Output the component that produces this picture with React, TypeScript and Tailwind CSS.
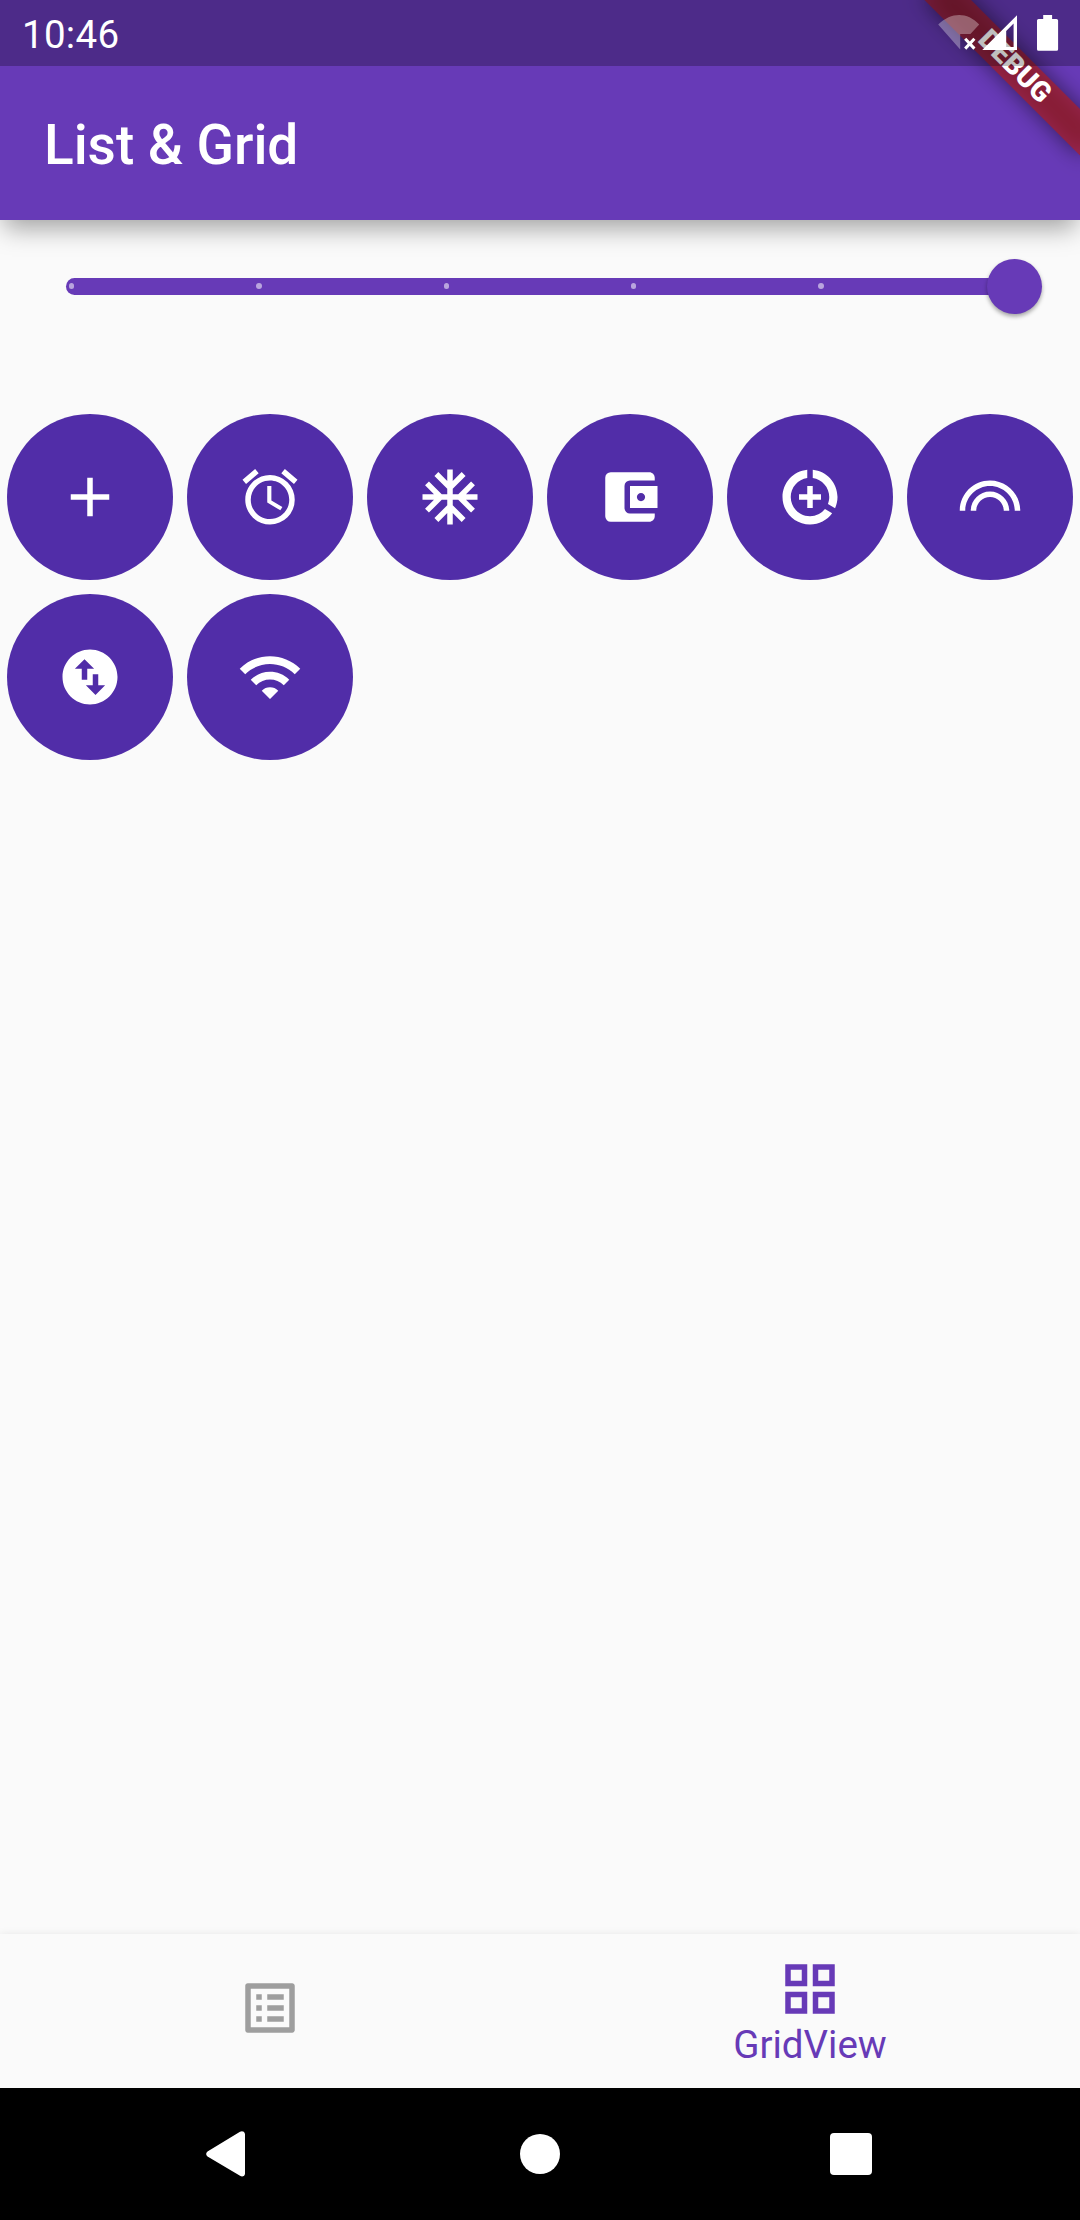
import type { IconType } from 'react-icons';
import {
  MdAccessAlarm,
  MdAccountBalanceWallet,
  MdAcUnit,
  MdAdd,
  MdDataSaverOn,
  MdGridView,
  MdListAlt,
  MdLooks,
  MdSwapVerticalCircle,
  MdWifi,
} from 'react-icons/md';

const gridIcons: IconType[] = [
  MdAdd,
  MdAccessAlarm,
  MdAcUnit,
  MdAccountBalanceWallet,
  MdDataSaverOn,
  MdLooks,
  MdSwapVerticalCircle,
  MdWifi,
];

function StatusBar() {
  return (
    <div className="absolute inset-x-0 top-0 z-20 flex h-[66px] items-start justify-between bg-black/25 pl-[22px] text-white">
      <span className="mt-[12px] text-[38.5px] leading-[46px] tracking-[0.3px]">10:46</span>
      <svg width="180" height="66" viewBox="0 0 180 66" fill="currentColor">
        <path opacity=".32" d="M38.2 24.4C45 18.2 52 15 59.2 15S73 18.2 79.2 24.4L70.4 34H60.2V49.6Z" />
        <path d="M65.2 38.8l9.2 9.8M74.4 38.8l-9.2 9.8" fill="none" stroke="currentColor" strokeWidth="3" />
        <path fillRule="evenodd" d="M82.2 50L117 15.2V50ZM106.2 47H113.6V23.6L106.2 31Z" />
        <path d="M143.2 15h8.9v4h4.4q1.6 0 1.6 1.6v28.6q0 1.6-1.6 1.6h-17.9q-1.6 0-1.6-1.6V20.6q0-1.6 1.6-1.6h4.6z" />
      </svg>
    </div>
  );
}

function DebugBanner() {
  return (
    <div className="absolute right-0 top-0 z-10 h-[180px] w-[180px] overflow-hidden">
      <div className="absolute -right-[110px] top-[77px] h-[33px] w-[220px] origin-[110px_-77px] rotate-45">
        <div className="absolute inset-0 bg-black/50 blur-[10.9px]" />
        <div className="absolute inset-0 flex items-center justify-center bg-[#b71c1c]/63 pl-[2px] text-[28.05px] font-black leading-none text-white">
          DEBUG
        </div>
      </div>
    </div>
  );
}

function Slider() {
  return (
    <div className="flex h-[132px] items-center pl-[66px]">
      <div className="relative flex h-[17px] w-[948px] items-center rounded-l-full bg-[#673ab7] pl-[2.75px]">
        {[0, 1, 2, 3, 4].map((tick) => (
          <div key={tick} className="flex w-[187.4px] shrink-0 items-center">
            <span className="size-[5.5px] rounded-full bg-white/54" />
          </div>
        ))}
        <div className="absolute -right-[28px] size-[55px] rounded-full bg-[#673ab7] shadow-[0_2.5px_4px_rgba(0,0,0,0.35)]" />
      </div>
    </div>
  );
}

export default function App() {
  return (
    <div className="relative flex h-[2220px] w-[1080px] flex-col overflow-hidden bg-[#fafafa] font-['Roboto',sans-serif]">
      <StatusBar />
      <DebugBanner />
      <header className="flex h-[220px] shrink-0 items-center bg-[#673ab7] pl-[44px] pt-[70px] shadow-[0_12px_24px_-4px_rgba(0,0,0,0.36)]">
        <h1 className="text-[55px] font-medium leading-[64px] tracking-[-0.05px] text-white">List &amp; Grid</h1>
      </header>

      <main className="flex flex-1 flex-col gap-[55px]">
        <Slider />
        <div className="grid grid-cols-6">
          {gridIcons.map((Icon, i) => (
            <div key={i} className="flex h-[180px] items-center justify-center">
              <div className="flex size-[165.4px] items-center justify-center rounded-full bg-[#512da8] text-white">
                <Icon size={66} />
              </div>
            </div>
          ))}
        </div>
      </main>

      <nav className="grid h-[154px] shrink-0 grid-cols-2 bg-[#fafafa] shadow-[0_0_8px_rgba(0,0,0,0.08)]">
        <div className="flex justify-center pt-[41px] text-[#9e9e9e]">
          <MdListAlt size={66} />
        </div>
        <div className="flex flex-col items-center pt-[22px] text-[#673ab7]">
          <MdGridView size={66} />
          <span className="text-[38.5px] leading-[45px]">GridView</span>
        </div>
      </nav>

      <div className="flex h-[132px] shrink-0 items-center justify-between bg-black pl-[206px] pr-[208px] text-white">
        <svg width="44" height="46" viewBox="0 0 44 46" fill="currentColor">
          <path d="M1.5 20.6L34 .8Q36 -.2 37.8 .8Q39 1.8 39 3.5V42.5Q39 44.2 37.8 45Q36 46 34 44.8L1.5 25.4Q-1.2 23 1.5 20.6Z" />
        </svg>
        <div className="size-[40px] rounded-full bg-white" />
        <div className="size-[42px] rounded-[4px] bg-white" />
      </div>
    </div>
  );
}
